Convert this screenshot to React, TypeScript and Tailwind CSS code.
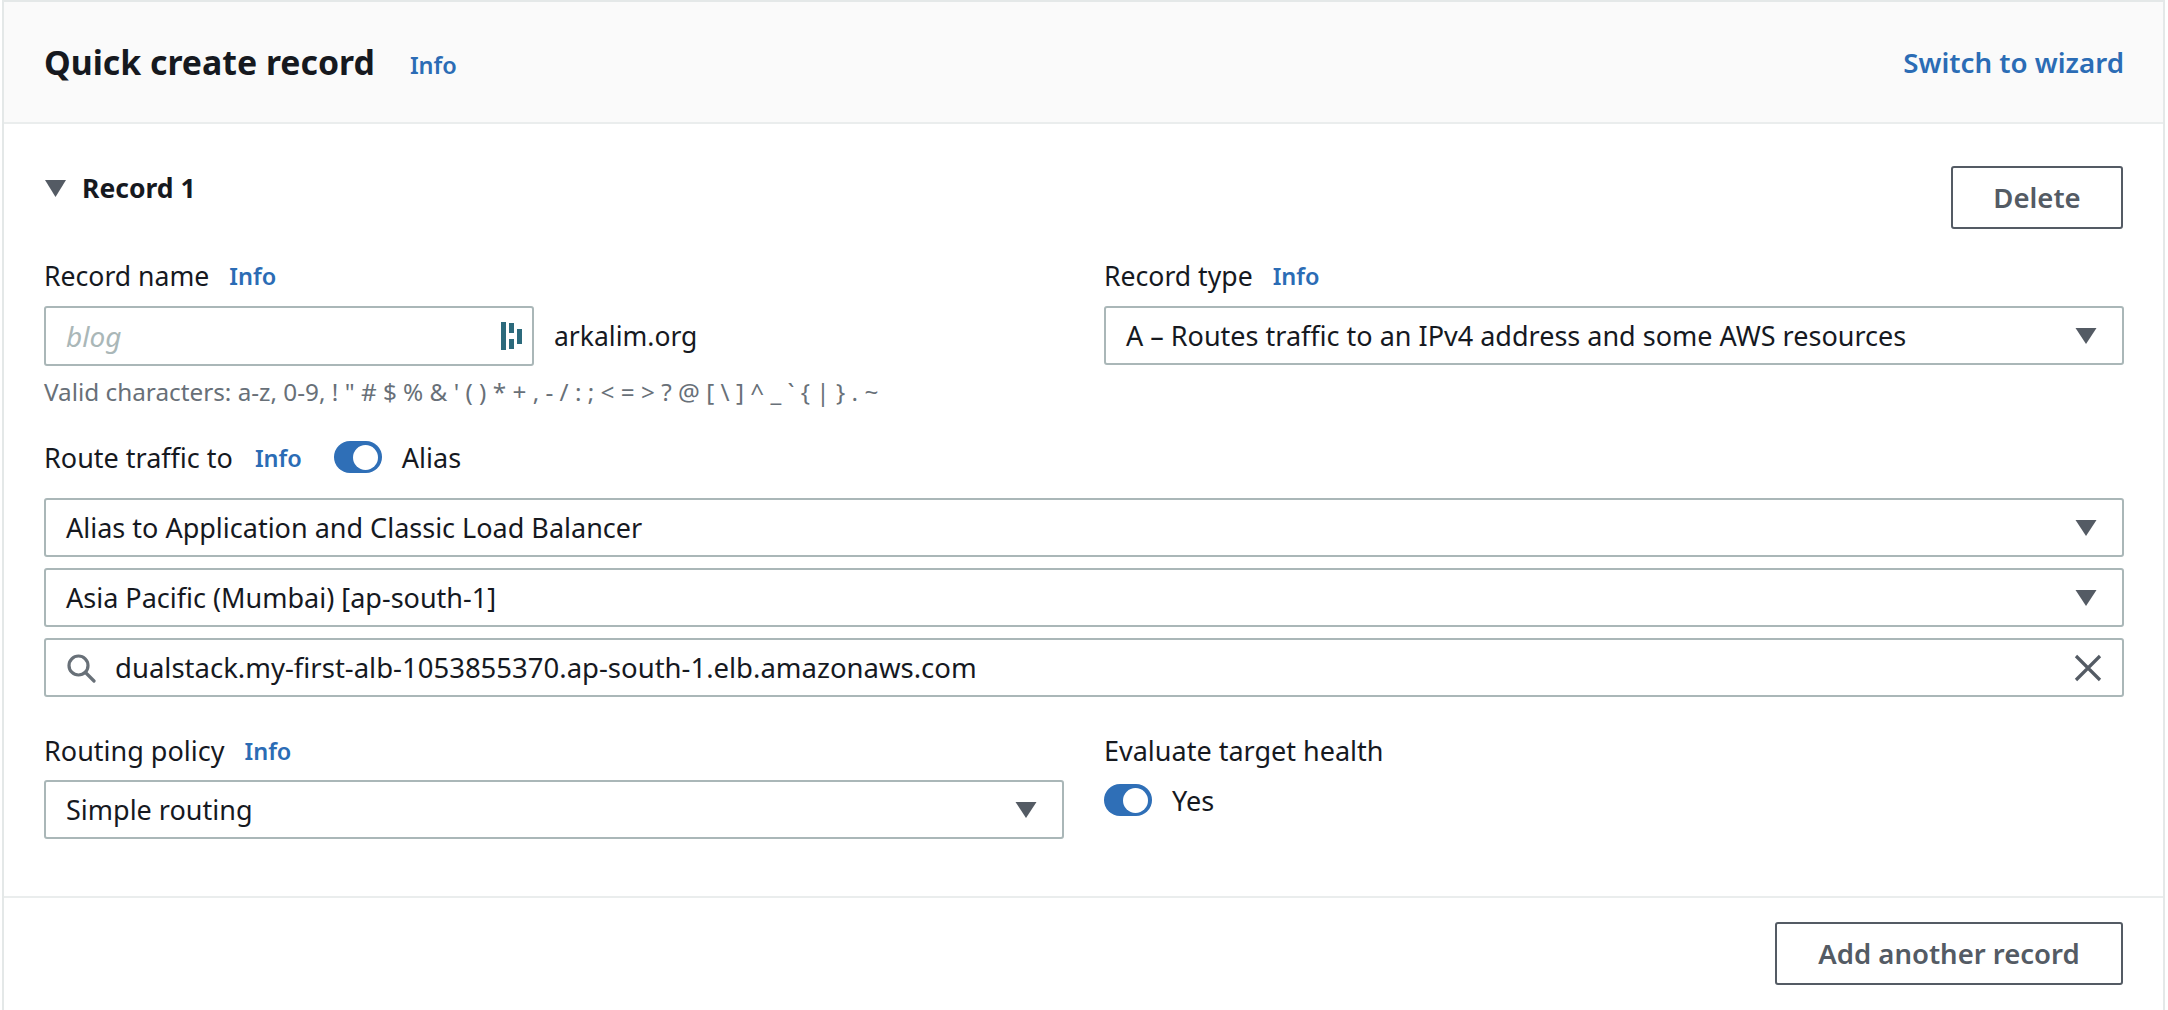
const Info = ({ className = "" }: { className?: string }) => (
  <span className={`mt-[2px] text-[23.5px] leading-none font-semibold text-[#2b6cb5] ${className}`}>Info</span>
);

const Caret = () => (
  <svg width="22" height="18" viewBox="0 0 22 18" className="shrink-0">
    <path d="M0.5 1 H21.5 L11 17 Z" fill="#545b64" />
  </svg>
);

const Toggle = () => (
  <span className="flex h-[32px] w-[48px] items-center justify-end rounded-full bg-[#2f6fb7] pr-[4px]">
    <span className="h-[25px] w-[25px] rounded-full bg-white" />
  </span>
);

const Select = ({ text, className = "" }: { text: string; className?: string }) => (
  <div className={`flex h-[59px] items-center justify-between rounded-[3px] border-2 border-[#aab7b8] pl-[20px] pr-[25px] ${className}`}>
    <span>{text}</span>
    <Caret />
  </div>
);

const Outline = ({ text, className = "" }: { text: string; className?: string }) => (
  <div className={`mr-[1px] flex h-[63px] items-center justify-center rounded-[3px] border-2 border-[#545b64] text-[27.5px] font-semibold text-[#545b64] ${className}`}>
    {text}
  </div>
);

export default function App() {
  return (
    <div className="h-[1010px] w-[2168px] overflow-hidden bg-white text-[27px] leading-none text-[#16191f] [font-family:'Noto_Sans',sans-serif]">
      <div className="ml-[2px] mr-[3px] h-full border-x-2 border-t-2 border-[#e4e8e8]">
        <header className="flex h-[122px] items-center justify-between border-b-2 border-[#eaeded] bg-[#fafafa] pl-[40px] pr-[39px] pt-[2px]">
          <div className="flex items-center gap-[35px]">
            <h1 className="text-[33.8px] font-bold">Quick create record</h1>
            <Info className="mt-[6px]" />
          </div>
          <span className="text-[27.7px] font-semibold text-[#2b6cb5]">Switch to wizard</span>
        </header>

        <div className="pl-[40px] pr-[39px]">
          <div className="flex h-[107px] items-start justify-between pt-[42px]">
            <div className="ml-[1px] flex items-center gap-[16px] pt-[9px]">
              <svg width="21" height="17" viewBox="0 0 21 17"><path d="M0 0 H21 L10.5 17 Z" fill="#545b64" /></svg>
              <span className="text-[26.5px] font-bold">Record 1</span>
            </div>
            <Outline text="Delete" className="w-[172px]" />
          </div>

          <div className="grid grid-cols-[1020px_1020px] gap-x-[40px] pt-[31px]">
            <div>
              <div className="flex h-[28px] items-center gap-[20px]">
                <span className="text-[26.6px]">Record name</span>
                <Info />
              </div>
              <div className="mt-[16px] flex items-center gap-[20px]">
                <div className="flex h-[60px] w-[490px] items-center justify-between rounded-[3px] border-2 border-[#aab7b8] pl-[20px] pr-[10px]">
                  <span className="text-[28px] italic text-[#aab7b8]">blog</span>
                  <svg width="21" height="28" viewBox="0 0 21 28">
                    <rect x="0" y="0" width="5" height="28" fill="#2c6a7c" />
                    <rect x="8" y="1" width="5" height="10" fill="#2c6a7c" />
                    <rect x="8" y="17" width="5" height="10" fill="#2c6a7c" />
                    <rect x="16" y="7" width="5" height="15" fill="#2c6a7c" />
                  </svg>
                </div>
                <span className="text-[26.5px]">arkalim.org</span>
              </div>
              <p className="mt-[14px] whitespace-nowrap text-[24.3px] text-[#687078]">
                Valid characters: a-z, 0-9, ! " # $ % &amp; ' ( ) * + , - / : ; &lt; = &gt; ? @ [ \ ] ^ _ ` {"{"} | {"}"} . ~
              </p>
            </div>
            <div>
              <div className="flex h-[28px] items-center gap-[20px]">
                <span className="text-[26.6px]">Record type</span>
                <Info />
              </div>
              <Select text="A – Routes traffic to an IPv4 address and some AWS resources" className="mt-[16px]" />
            </div>
          </div>

          <div className="mt-[37px] flex h-[32px] items-center">
            <span>Route traffic to</span>
            <Info className="ml-[22px]" />
            <span className="ml-[32px]"><Toggle /></span>
            <span className="ml-[20px]">Alias</span>
          </div>

          <div className="mt-[25px] flex flex-col gap-[11px]">
            <Select text="Alias to Application and Classic Load Balancer" />
            <Select text="Asia Pacific (Mumbai) [ap-south-1]" />
            <div className="flex h-[59px] items-center justify-between rounded-[3px] border-2 border-[#aab7b8] pl-[20px] pr-[20px]">
              <div className="flex items-center gap-[19px]">
                <svg width="30" height="30" viewBox="0 0 30 30" fill="none" stroke="#687078" strokeWidth="3.2">
                  <circle cx="12.5" cy="12.5" r="9.5" />
                  <path d="M19.5 19.5 L28 28" strokeLinecap="round" />
                </svg>
                <span className="text-[27.5px]">dualstack.my-first-alb-1053855370.ap-south-1.elb.amazonaws.com</span>
              </div>
              <svg width="28" height="28" viewBox="0 0 28 28" fill="none" stroke="#545b64" strokeWidth="3.2">
                <path d="M2 2 L26 26 M26 2 L2 26" />
              </svg>
            </div>
          </div>

          <div className="grid grid-cols-[1020px_1020px] gap-x-[40px] pt-[39px]">
            <div>
              <div className="flex h-[28px] items-center gap-[20px]">
                <span>Routing policy</span>
                <Info />
              </div>
              <Select text="Simple routing" className="mt-[16px]" />
            </div>
            <div>
              <div className="flex h-[28px] items-center">Evaluate target health</div>
              <div className="mt-[20px] flex items-center gap-[20px]">
                <Toggle />
                <span>Yes</span>
              </div>
            </div>
          </div>
        </div>

        <footer className="mt-[57px] flex justify-end border-t-2 border-[#eaeded] pr-[39px] pt-[24px]">
          <Outline text="Add another record" className="w-[348px]" />
        </footer>
      </div>
    </div>
  );
}
